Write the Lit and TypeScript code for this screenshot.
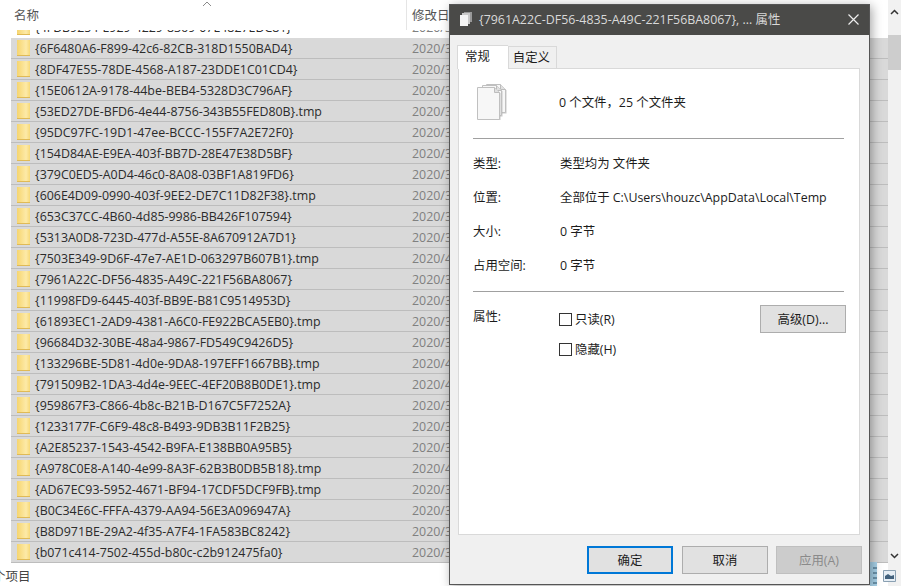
import { LitElement, html, css, svg } from "lit";
import { customElement } from "lit/decorators.js";

const rows: [string, string][] = [
  ["{6F6480A6-F899-42c6-82CB-318D1550BAD4}", "3"],
  ["{8DF47E55-78DE-4568-A187-23DDE1C01CD4}", "3"],
  ["{15E0612A-9178-44be-BEB4-5328D3C796AF}", "3"],
  ["{53ED27DE-BFD6-4e44-8756-343B55FED80B}.tmp", "3"],
  ["{95DC97FC-19D1-47ee-BCCC-155F7A2E72F0}", "3"],
  ["{154D84AE-E9EA-403f-BB7D-28E47E38D5BF}", "3"],
  ["{379C0ED5-A0D4-46c0-8A08-03BF1A819FD6}", "3"],
  ["{606E4D09-0990-403f-9EE2-DE7C11D82F38}.tmp", "3"],
  ["{653C37CC-4B60-4d85-9986-BB426F107594}", "3"],
  ["{5313A0D8-723D-477d-A55E-8A670912A7D1}", "3"],
  ["{7503E349-9D6F-47e7-AE1D-063297B607B1}.tmp", "4"],
  ["{7961A22C-DF56-4835-A49C-221F56BA8067}", "3"],
  ["{11998FD9-6445-403f-BB9E-B81C9514953D}", "3"],
  ["{61893EC1-2AD9-4381-A6C0-FE922BCA5EB0}.tmp", "3"],
  ["{96684D32-30BE-48a4-9867-FD549C9426D5}", "3"],
  ["{133296BE-5D81-4d0e-9DA8-197EFF1667BB}.tmp", "4"],
  ["{791509B2-1DA3-4d4e-9EEC-4EF20B8B0DE1}.tmp", "4"],
  ["{959867F3-C866-4b8c-B21B-D167C5F7252A}", "3"],
  ["{1233177F-C6F9-48c8-B493-9DB3B11F2B25}", "3"],
  ["{A2E85237-1543-4542-B9FA-E138BB0A95B5}", "3"],
  ["{A978C0E8-A140-4e99-8A3F-62B3B0DB5B18}.tmp", "4"],
  ["{AD67EC93-5952-4671-BF94-17CDF5DCF9FB}.tmp", "3"],
  ["{B0C34E6C-FFFA-4379-AA94-56E3A096947A}", "3"],
  ["{B8D971BE-29A2-4f35-A7F4-1FA583BC8242}", "3"],
  ["{b071c414-7502-455d-b80c-c2b912475fa0}", "3"],
];

const page = (x: number, y: number, w: number, h: number) => svg`
  <path d="M${x + 1.5} ${y + 1.5}h${w - 5}l5 5v${h - 5}h${-w}z" fill="#b4b4b4" opacity=".7"/>
  <path d="M${x + 0.5} ${y + 0.5}h${w - 5}l5 5v${h - 5}h${-w}z" fill="#f7f7f7" stroke="#c0c0c0"/>
  <path d="M${x + w - 4.5} ${y + 0.5}v5h5" fill="#e0e0e0" stroke="#bdbdbd"/>`;

@customElement("app-root")
export class AppRoot extends LitElement {
  static styles = css`
    :host {
      display: block;
      position: relative;
      width: 901px;
      height: 586px;
      overflow: hidden;
      background: #fff;
      font-family: "Open Sans", "Noto Sans CJK SC", sans-serif;
      font-size: 12.4px;
      color: #222;
    }
    .explorer { display: flex; height: 100%; }
    .main { width: 888px; display: flex; flex-direction: column; }
    .head { height: 30px; display: flex; position: relative; color: #555; font-size: 12.5px; }
    .name { width: 406px; padding: 5px 0 0 14px; box-sizing: border-box; }
    .date { border-left: 1px solid #e5e5e5; padding: 5px 0 0 5px; }
    .sort { position: absolute; left: 202px; top: 1px; }
    .clip { height: 8px; overflow: hidden; position: relative; padding-left: 11px; }
    .clip .row { background: transparent; border: 0; margin-top: -13px; }
    .row {
      height: 20px;
      border-bottom: 1px solid #bdbdbd;
      margin-left: 11px;
      background: #d9d9d9;
      display: flex;
      align-items: center;
      color: #2b2b2b;
      white-space: nowrap;
    }
    .clip .row { margin-left: 0; }
    .folder { width: 13px; height: 15px; margin: 0 5px 0 6px; flex: none; background: linear-gradient(90deg, #f6d56f, #fdeaa8 70%, #f7d978); border-bottom: 1px solid #e0ba55; }
    .fname { width: 377px; flex: none; }
    .fdate { color: #808080; }
    .status { padding: 3px 0 0 0; font-size: 12.5px; color: #444; margin-left: -7px; }
    .scroll { width: 13px; background: #f1f1f1; position: relative; }
    .thumb { position: absolute; top: 35px; left: 0; right: 0; height: 35px; background: #cdcdcd; }
    .arrow { position: absolute; left: 2px; }
    .paneblue { position: absolute; left: 870px; top: 562px; width: 7px; height: 24px; background: #a9d3ea; }
    .paneblue svg { display: block; }
    .viewicon { position: absolute; left: 883px; top: 570px; }

    .dialog {
      position: absolute;
      left: 449px;
      top: 4px;
      width: 421px;
      height: 581px;
      box-sizing: border-box;
      border: 1px solid #555;
      background: #f0f0f0;
      box-shadow: 2px 2px 10px rgba(0,0,0,.35);
      display: flex;
      flex-direction: column;
      color: #1c1c1c;
    }
    .title {
      height: 30px;
      box-sizing: border-box;
      padding: 0 0 2px 10px;
      background: #4a4a48;
      color: #d9d9d9;
      display: flex;
      align-items: center;
      gap: 7px;
      flex: none;
    }
    .title span { flex: 1; }
    .close { margin-right: 10px; }
    .tabs { display: flex; padding: 9px 0 0 7px; height: 24px; flex: none; align-items: flex-end; }
    .tab { border: 1px solid #d9d9d9; border-bottom: 0; height: 22px; box-sizing: border-box; padding: 0 6px 2px 4px; background: #f0f0f0; display: flex; align-items: center; }
    .tab.on { height: 24px; background: #fff; padding: 0 18px 4px 7px; margin-bottom: -1px; position: relative; z-index: 1; border-right: 0; }
    .pane {
      margin: 0 9px 0 8px;
      height: 467px;
      flex: none;
      background: #fff;
      border: 1px solid #d9d9d9;
      box-sizing: border-box;
      padding: 0 15px 0 14px;
      display: flex;
      flex-direction: column;
    }
    .top { display: flex; height: 69px; box-sizing: border-box; padding-bottom: 3px; align-items: center; }
    .top svg { margin-left: 3px; }
    .top span { margin-left: 51px; }
    hr { border: 0; border-top: 1px solid #a0a0a0; margin: 0; }
    .info { display: grid; grid-template-columns: 87px 1fr; grid-auto-rows: 34px; padding-top: 7px; height: 152px; box-sizing: border-box; align-items: center; align-content: start; }
    .attrs { display: grid; grid-template-columns: 87px 1fr auto; grid-auto-rows: 33px; padding-top: 8px; }
    .attrs > div { padding-top: 7px; }
    .checks { display: flex; flex-direction: column; gap: 12px; padding-top: 10px !important; margin-left: -1px; }
    .check { display: flex; align-items: center; gap: 3px; height: 18px; }
    .box { width: 11px; height: 11px; border: 1px solid #333; }
    .btn {
      width: 86px;
      height: 28px;
      box-sizing: border-box;
      background: #e1e1e1;
      border: 1px solid #adadad;
      display: flex;
      align-items: center;
      justify-content: center;
    }
    .attrs > .adv { margin: 5px -2px 0 0; padding: 0; }
    .foot { display: flex; justify-content: flex-end; gap: 9px; padding: 11px 7px 0 0; }
    .btn.primary { border: 2px solid #0078d7; }
    .btn.off { background: #cccccc; border-color: #bfbfbf; color: #8a8a8a; margin-left: -1px; }
  `;

  render() {
    const row = ([n, m]: [string, string]) => html`
      <div class="row">
        <div class="folder"></div>
        <div class="fname">${n}</div>
        <div class="fdate">2020/${m}</div>
      </div>`;
    return html`
      <div class="explorer">
        <div class="main">
          <div class="head">
            <svg class="sort" width="10" height="6" viewBox="0 0 10 6"><path d="M1 5l4-4 4 4" fill="none" stroke="#8a8a8a"/></svg>
            <div class="name">名称</div>
            <div class="date">修改日期</div>
          </div>
          <div class="clip">
            <div class="row">
              <div class="folder"></div>
              <div class="fname">{4FDB9254-E929-4229-8369-07E4827EDC81}</div>
              <div class="fdate">2020/3</div>
            </div>
          </div>
          ${rows.map(row)}
          <div class="status">个项目</div>
        </div>
        <div class="scroll">
          <svg class="arrow" style="top:9px" width="9" height="6" viewBox="0 0 9 6"><path d="M1 5l3.500-3.500L8 5" fill="none" stroke="#333" stroke-width="1.500"/></svg>
          <div class="thumb"></div>
          <svg class="arrow" style="top:553px" width="9" height="6" viewBox="0 0 9 6"><path d="M1 1l3.500 3.500L8 1" fill="none" stroke="#333" stroke-width="1.500"/></svg>
        </div>
      </div>
      <div class="paneblue">
        <svg width="7" height="24" viewBox="0 0 7 24"><path d="M3 6h4M3 11h4M3 16h4M3 21h4" stroke="#31566f"/></svg>
      </div>
      <svg class="viewicon" width="13" height="12" viewBox="0 0 13 12"><path d="M.5.5h12v11H.5z" fill="#e6eef5" stroke="#8aa0b2"/><path d="M2 6l3-2 3 2 3-1v4H2z" fill="#41617d"/></svg>
      <div class="dialog">
        <div class="title">
          <svg width="12" height="14" viewBox="0 0 12 14"><path d="M4 0h8v10H4z" fill="#999"/><path d="M2 1h8v11H2z" fill="#c9c9c9"/><path d="M0 3h8v11H0z" fill="#f4f4f4"/></svg>
          <span>{7961A22C-DF56-4835-A49C-221F56BA8067}, ... 属性</span>
          <svg class="close" width="11" height="11" viewBox="0 0 11 11"><path d="M.5.5l10 10M10.500.5l-10 10" stroke="#eee" stroke-width="1.200"/></svg>
        </div>
        <div class="tabs">
          <div class="tab on">常规</div>
          <div class="tab">自定义</div>
        </div>
        <div class="pane">
          <div class="top">
            <svg width="32" height="36" viewBox="0 0 32 36">
              ${page(10, 0, 19, 28)}
              ${page(6, 1, 19, 30)}
              ${page(1, 3, 22, 32)}
            </svg>
            <span>0 个文件，25 个文件夹</span>
          </div>
          <hr />
          <div class="info">
            <div>类型:</div><div>类型均为 文件夹</div>
            <div>位置:</div><div>全部位于 C:\\Users\\houzc\\AppData\\Local\\Temp</div>
            <div>大小:</div><div>0 字节</div>
            <div>占用空间:</div><div>0 字节</div>
          </div>
          <hr />
          <div class="attrs">
            <div>属性:</div>
            <div class="checks">
              <div class="check"><div class="box"></div>只读(R)</div>
              <div class="check"><div class="box"></div>隐藏(H)</div>
            </div>
            <div class="btn adv">高级(D)...</div>
          </div>
        </div>
        <div class="foot">
          <div class="btn primary">确定</div>
          <div class="btn">取消</div>
          <div class="btn off">应用(A)</div>
        </div>
      </div>
    `;
  }
}
